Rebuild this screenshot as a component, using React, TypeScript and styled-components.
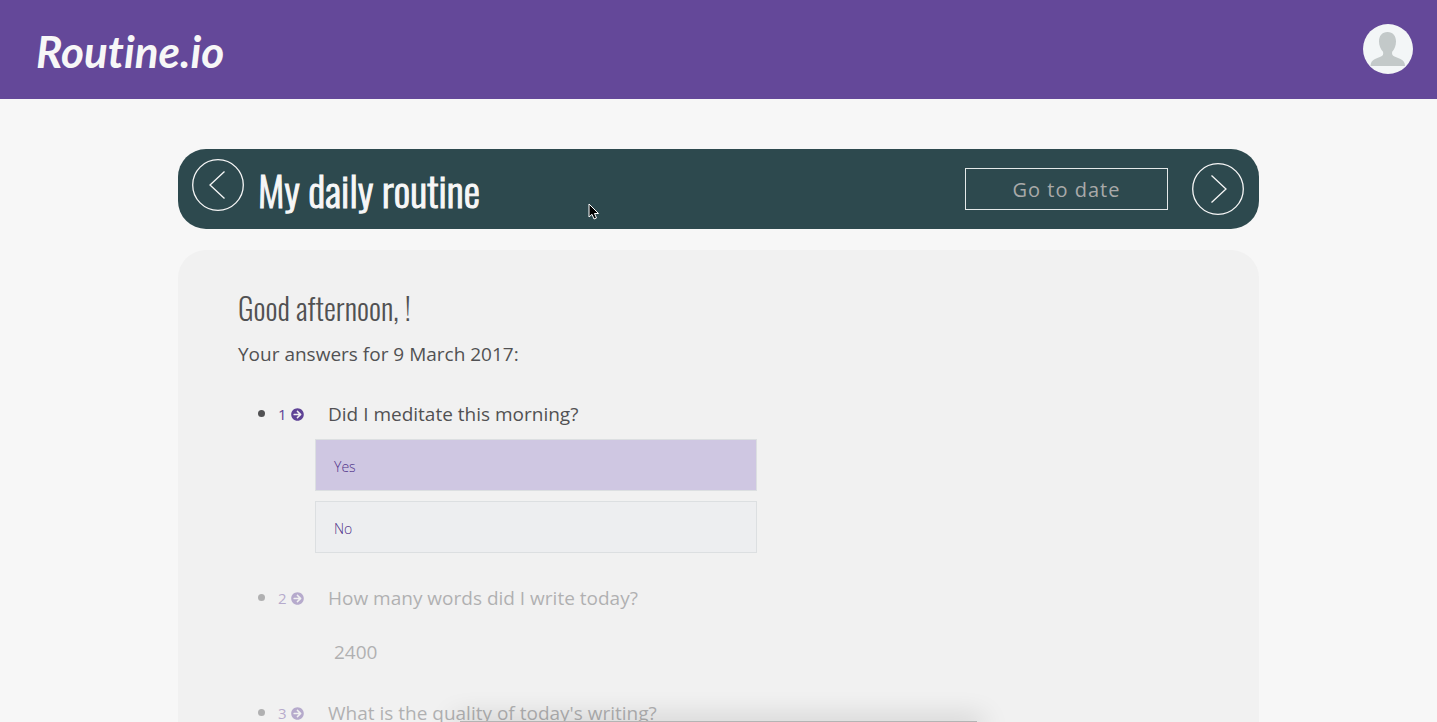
import React from "react";
import styled, { createGlobalStyle } from "styled-components";
import { FaArrowCircleRight } from "react-icons/fa";

const GlobalStyle = createGlobalStyle`
  *, *::before, *::after { box-sizing: border-box; }
  body {
    margin: 0;
    background: #f7f7f7;
    color: #515153;
    font-family: "Open Sans", "Noto Sans", sans-serif;
    font-size: 19px;
    line-height: 28px;
  }
`;

const condensed = `"Oswald", "Liberation Sans Narrow", sans-serif`;

const Page = styled.div`
  height: 100vh;
  overflow: hidden;
`;

const Header = styled.header`
  display: flex;
  align-items: center;
  justify-content: space-between;
  height: 99px;
  padding: 0 24px 1px 36px;
  background: #644899;
`;

const Logo = styled.a`
  padding-top: 4px;
  color: #f7f7f7;
  font-family: "Lato", sans-serif;
  font-size: 44px;
  font-style: italic;
  font-weight: 700;
  font-variant-ligatures: none;
  line-height: 56px;
  text-decoration: none;
`;

const Avatar = styled.button`
  width: 50px;
  height: 50px;
  padding: 0;
  border: 0;
  border-radius: 50%;
  background: #f3f6f7;
  overflow: hidden;
  svg { display: block; }
`;

const Content = styled.main`
  width: calc(100% - 48px);
  max-width: 1081px;
  margin: 50px auto 0;
`;

const TitleBar = styled.div`
  display: flex;
  align-items: flex-start;
  height: 80px;
  padding: 10px 15px 10px 14px;
  border-radius: 28px;
  background: #2d494e;
`;

const RoundButton = styled.button<{ $low?: boolean }>`
  flex: none;
  width: 52px;
  height: 52px;
  margin-top: ${(p) => (p.$low ? "4px" : "0")};
  padding: 0;
  border: 0;
  background: none;
  svg { display: block; }
`;

const Title = styled.h1`
  flex: 1;
  margin: 0 0 0 14px;
  color: #f7f7f7;
  font-family: ${condensed};
  font-size: 41px;
  font-weight: 300;
  line-height: 62px;
  -webkit-text-stroke: 1px #f7f7f7;
`;

const DateInput = styled.input`
  width: 203px;
  height: 42px;
  margin: 9px 24px 0 0;
  padding: 0;
  border: 1px solid #e4e9e9;
  border-radius: 0;
  background: none;
  color: #a9a9a9;
  font: 400 20px/28px "Open Sans", sans-serif;
  letter-spacing: 1px;
  text-align: center;
  &::placeholder { color: #a9a9a9; opacity: 1; }
`;

const Panel = styled.section`
  min-height: 800px;
  margin-top: 21px;
  padding: 34px 60px;
  border-radius: 28px;
  background: #f1f1f1;
`;

const Greeting = styled.h2`
  margin: 0;
  font-family: ${condensed};
  font-size: 30px;
  font-weight: 300;
  line-height: 48px;
`;

const Summary = styled.p`
  margin: 8px 0 31px;
`;

const Questions = styled.ul`
  margin: 0;
  padding: 0 0 0 40px;
`;

const Question = styled.li<{ $dim?: boolean }>`
  opacity: ${(p) => (p.$dim ? 0.4 : 1)};
`;

const QuestionLine = styled.div`
  display: flex;
  align-items: center;
`;

const Index = styled.span`
  display: flex;
  align-items: center;
  gap: 4px;
  width: 50px;
  color: #5f4396;
  font-size: 15px;
  line-height: 26px;
`;

const Choices = styled.div`
  display: grid;
  gap: 10px;
  width: 442px;
  max-width: 100%;
  margin: 11px 0 30px 37px;
`;

const Choice = styled.label`
  display: flex;
  align-items: center;
  height: 52px;
  padding: 4px 18px 0;
  border: 1px solid #dcdfe1;
  background: #edeef0;
  color: #4f3289;
  font-size: 14px;
  font-weight: 300;
  &:has(input:checked) { background: #cfc7e2; }
`;

const ChoiceInput = styled.input`
  appearance: none;
  position: absolute;
  margin: 0;
`;

const NumberInput = styled.input`
  display: block;
  width: 442px;
  max-width: 100%;
  height: 52px;
  margin: 14px 0 20px 37px;
  padding: 0 18px;
  border: 1px solid transparent;
  background: none;
  color: inherit;
  font: inherit;
`;

const DockShadow = styled.div`
  position: fixed;
  bottom: 0;
  left: 32%;
  right: 32%;
  height: 1px;
  background: #b4b4b4;
  box-shadow: 0 4px 28px 6px rgba(0, 0, 0, 0.2);
`;

const Cursor = styled.svg`
  position: fixed;
  top: 203px;
  left: 588px;
`;

const Chevron = ({ next }: { next?: boolean }) => (
  <svg width="52" height="52" viewBox="0 0 52 52" fill="none" stroke="#f7f7f7" strokeWidth="1.3" aria-hidden="true">
    <circle cx="26" cy="26" r="25.3" />
    <path d={next ? "M19.5 12.5 L34 26 L19.5 39.5" : "M32.5 12.5 L18 26 L32.5 39.5"} />
  </svg>
);

const Marker = ({ n }: { n: number }) => (
  <Index>
    {n}
    <FaArrowCircleRight size={13} />
  </Index>
);

export default function App() {
  return (
    <Page>
      <GlobalStyle />
      <Header>
        <Logo href="#">Routine.io</Logo>
        <Avatar aria-label="Account">
          <svg width="50" height="50" viewBox="0 0 50 50" fill="#c3c9c9">
            <path d="M24.5 8 C30 8 33 12 33 17.5 C33 21.5 31.5 25.5 29.2 27.7 C28.6 30 29.5 31.5 31.5 32.5 L37.5 35 C40.5 36.4 42 38.6 42 42 H7.5 C7.5 38.6 9 36.4 12 35 L18 32.5 C20 31.5 20.6 30 20 27.7 C17.7 25.5 16 21.5 16 17.5 C16 12 19 8 24.5 8 Z" />
          </svg>
        </Avatar>
      </Header>
      <Content>
        <TitleBar>
          <RoundButton aria-label="Previous day"><Chevron /></RoundButton>
          <Title>My daily routine</Title>
          <DateInput type="text" placeholder="Go to date" aria-label="Go to date" />
          <RoundButton $low aria-label="Next day"><Chevron next /></RoundButton>
        </TitleBar>
        <Panel>
          <Greeting>Good afternoon, !</Greeting>
          <Summary>Your answers for 9 March 2017:</Summary>
          <Questions>
            <Question>
              <QuestionLine><Marker n={1} /><span id="q1">Did I meditate this morning?</span></QuestionLine>
              <Choices role="radiogroup" aria-labelledby="q1">
                <Choice><ChoiceInput type="radio" name="meditate" defaultChecked />Yes</Choice>
                <Choice><ChoiceInput type="radio" name="meditate" />No</Choice>
              </Choices>
            </Question>
            <Question $dim>
              <QuestionLine><Marker n={2} /><label htmlFor="q2">How many words did I write today?</label></QuestionLine>
              <NumberInput id="q2" type="text" inputMode="numeric" defaultValue="2400" />
            </Question>
            <Question $dim>
              <QuestionLine><Marker n={3} /><span>What is the quality of today's writing?</span></QuestionLine>
            </Question>
          </Questions>
        </Panel>
      </Content>
      <DockShadow />
      <Cursor width="12" height="18" viewBox="0 0 12 18" aria-hidden="true">
        <path d="M1 1 V14 L4 11.3 L6 16 L8.5 15 L6.5 10.5 H10.5 Z" fill="#000" stroke="#fff" strokeWidth="1" />
      </Cursor>
    </Page>
  );
}
